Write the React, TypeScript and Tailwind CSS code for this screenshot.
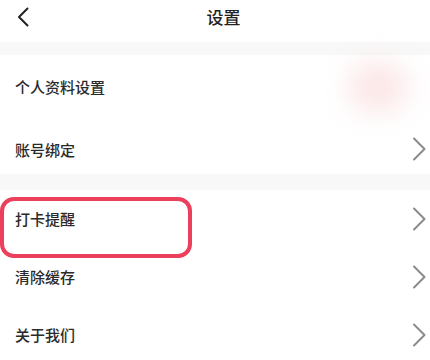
import React from "react";

const Chevron = () => (
  <svg width="14" height="24" viewBox="0 0 14 24" fill="none" className="shrink-0">
    <path d="M2 1.5 L12.5 12 L2 22.5" stroke="#8a8a8a" strokeWidth="2" strokeLinecap="round" strokeLinejoin="round" />
  </svg>
);

const Row = ({ label, h }: { label: string; h: string }) => (
  <div className={`flex items-center ${h} pl-[15px] pr-[4px] justify-between`}>
    <span className="text-[15px] leading-[20px] text-[#2a2a2a] font-medium">{label}</span>
    <Chevron />
  </div>
);

export default function App() {
  return (
    <div
      className="relative w-[430px] h-[360px] overflow-hidden bg-white"
      style={{ fontFamily: '"Noto Sans CJK SC", "Noto Sans", sans-serif' }}
    >
      <div className="relative flex items-center justify-center h-[42px]">
        <svg width="14" height="20" viewBox="0 0 14 20" fill="none" className="absolute left-[16px] top-[7px]">
          <path d="M11.5 1.5 L3 10 L11.5 18.5" stroke="#222" strokeWidth="2" strokeLinecap="round" strokeLinejoin="round" />
        </svg>
        <span className="text-[17px] leading-[22px] text-[#222] font-medium ml-[17px] mt-[-8px]">设置</span>
      </div>
      <div className="h-[13px] bg-[#f8f8f8]" />
      <div className="flex items-center h-[64px] pl-[15px] pr-[4px] justify-between">
        <span className="text-[15px] leading-[20px] text-[#2a2a2a] font-medium">个人资料设置</span>
        <div className="w-[60px] h-[50px] mr-[18px] rounded-full bg-[#f9d6d6] blur-[14px] opacity-60" />
      </div>
      <div className="flex items-start pt-[20px] h-[55px] pl-[15px] pr-[4px] justify-between">
        <span className="text-[15px] leading-[20px] text-[#2a2a2a] font-medium mt-[1px]">账号绑定</span>
        <div className="mt-[-2px]"><Chevron /></div>
      </div>
      <div className="h-[16px] bg-[#f8f8f8]" />
      <Row label="打卡提醒" h="h-[58px]" />
      <Row label="清除缓存" h="h-[58px]" />
      <Row label="关于我们" h="h-[58px]" />
      <div className="absolute left-0 top-[197px] w-[192px] h-[61px] border-[4px] border-[#ec3f5c] rounded-[14px]" />
    </div>
  );
}
